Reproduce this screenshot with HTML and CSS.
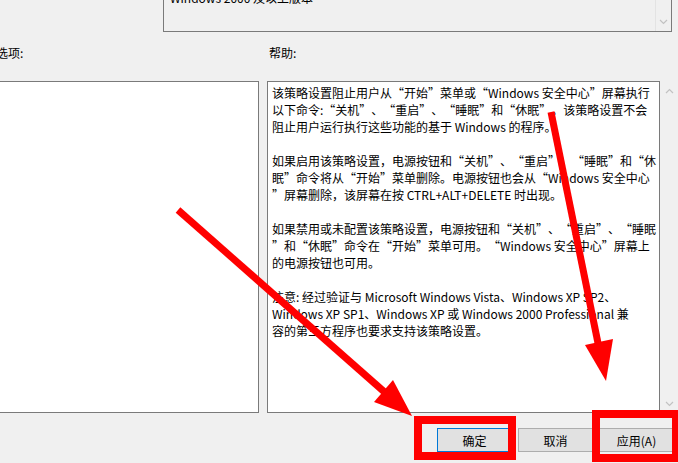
FILE: index.html
```html
<!DOCTYPE html>
<html lang="zh-CN">
<head>
  <meta charset="UTF-8">
  <meta name="viewport" content="width=device-width, initial-scale=1.0">
  <title>关闭选项</title>
  <link rel="stylesheet" href="styles.css">
</head>
<body>
  <div class="dialog">
    <div class="supported">
      <div class="supported-text">Windows 2000 及以上版本</div>
      <div class="vscroll narrow">
        <svg class="chevron" width="9" height="6" viewBox="0 0 9 6"><polyline points="1,1 4.5,4.5 8,1"/></svg>
      </div>
    </div>

    <div class="captions">
      <span class="caption options-caption">选项:</span>
      <span class="caption">帮助:</span>
    </div>

    <div class="panes">
      <div class="options-list"></div>
      <div class="help-pane">
        <p>该策略设置阻止用户从“开始”菜单或“Windows 安全中心”屏幕执行<br>以下命令:“关机”、“重启”、“睡眠”和“休眠”。该策略设置不会<br>阻止用户运行执行这些功能的基于 Windows 的程序。</p>
        <p>如果启用该策略设置，电源按钮和“关机”、“重启”、“睡眠”和“休<br>眠”命令将从“开始”菜单删除。电源按钮也会从“Windows 安全中心<br>”屏幕删除，该屏幕在按 CTRL+ALT+DELETE 时出现。</p>
        <p>如果禁用或未配置该策略设置，电源按钮和“关机”、“重启”、“睡眠<br>”和“休眠”命令在“开始”菜单可用。“Windows 安全中心”屏幕上<br>的电源按钮也可用。</p>
        <p>注意: 经过验证与 Microsoft Windows Vista、Windows XP SP2、<br>Windows XP SP1、Windows XP 或 Windows 2000 Professional 兼<br>容的第三方程序也要求支持该策略设置。</p>
      </div>
      <div class="vscroll">
        <svg class="chevron" width="9" height="6" viewBox="0 0 9 6"><polyline points="1,5 4.5,1.5 8,5"/></svg>
        <svg class="chevron" width="9" height="6" viewBox="0 0 9 6"><polyline points="1,1 4.5,4.5 8,1"/></svg>
      </div>
    </div>

    <div class="actions">
      <button class="btn default">确定</button>
      <button class="btn">取消</button>
      <button class="btn">应用(A)</button>
    </div>

    <!-- red annotation marks drawn over the dialog -->
    <svg class="marks" width="678" height="463" viewBox="0 0 678 463">
      <line x1="178" y1="210" x2="389" y2="396" />
      <polygon points="412,416 393,380 374,402" />
      <line x1="551" y1="112" x2="599" y2="348" />
      <polygon points="606,381 613,339 585,345" />
      <rect x="418" y="420" width="94" height="36" />
      <rect x="596" y="414" width="80" height="44" />
    </svg>
  </div>
</body>
</html>
```

FILE: styles.css
```css
body {
  margin: 0;
  background-color: #f0f0f0;
  font-family: "Noto Sans CJK SC", sans-serif;
  font-size: 12px;
  color: #000;
  text-spacing-trim: space-all;
  overflow: hidden;
}

.dialog {
  position: relative;
  width: 678px;
  height: 463px;
  overflow: hidden;
}

/* "supported on" box, scrolled up past the top */
.supported {
  display: flex;
  box-sizing: border-box;
  width: 509px;
  height: 50px;
  margin-top: -18px;
  margin-left: 163px;
  border: 1px solid #7a7a7a;
}
.supported-text {
  flex: 1;
  padding: 6px 6px 0;
  line-height: 17px;
  white-space: nowrap;
}

.vscroll {
  display: flex;
  flex-direction: column;
  justify-content: space-between;
  align-items: center;
  box-sizing: border-box;
  width: 18px;
  padding: 7px 0 6px;
}
.vscroll.narrow {
  width: 16px;
  justify-content: flex-end;
  padding-bottom: 6px;
  border-left: 1px solid #e3e3e3;
}
.chevron polyline {
  fill: none;
  stroke: #c2c2c2;
  stroke-width: 1.2;
}

.captions {
  display: flex;
  height: 49px;
  padding-top: 12px;
  box-sizing: border-box;
  line-height: 17px;
}
.options-caption {
  width: 273px;
  margin-left: -4px;
}

.panes {
  display: flex;
  height: 332px;
  margin-left: -2px;
}
.options-list {
  box-sizing: border-box;
  width: 261px;
  margin-right: 8px;
  border: 1px solid #7a7a7a;
  background-color: #fff;
}
.help-pane {
  box-sizing: border-box;
  width: 393px;
  padding: 2px 4px;
  border: 1px solid #7a7a7a;
  background-color: #fff;
  line-height: 17px;
  white-space: nowrap;
  overflow: hidden;
}
.help-pane p {
  margin: 0 0 17px;
}

.actions {
  display: flex;
  justify-content: flex-end;
  gap: 6px;
  margin-top: 15px;
  padding-right: 4px;
}
.btn {
  box-sizing: border-box;
  width: 75px;
  height: 24px;
  padding: 0;
  border: 1px solid #adadad;
  background-color: #e1e1e1;
  font-family: inherit;
  font-size: 12px;
  color: #000;
}
.btn.default {
  border-color: #0078d7;
}

.marks {
  position: absolute;
  top: 0;
  left: 0;
  pointer-events: none;
}
.marks line {
  stroke: #ff0000;
  stroke-width: 7;
}
.marks polygon {
  fill: #ff0000;
}
.marks rect {
  fill: none;
  stroke: #ff0000;
  stroke-width: 8;
}
```
